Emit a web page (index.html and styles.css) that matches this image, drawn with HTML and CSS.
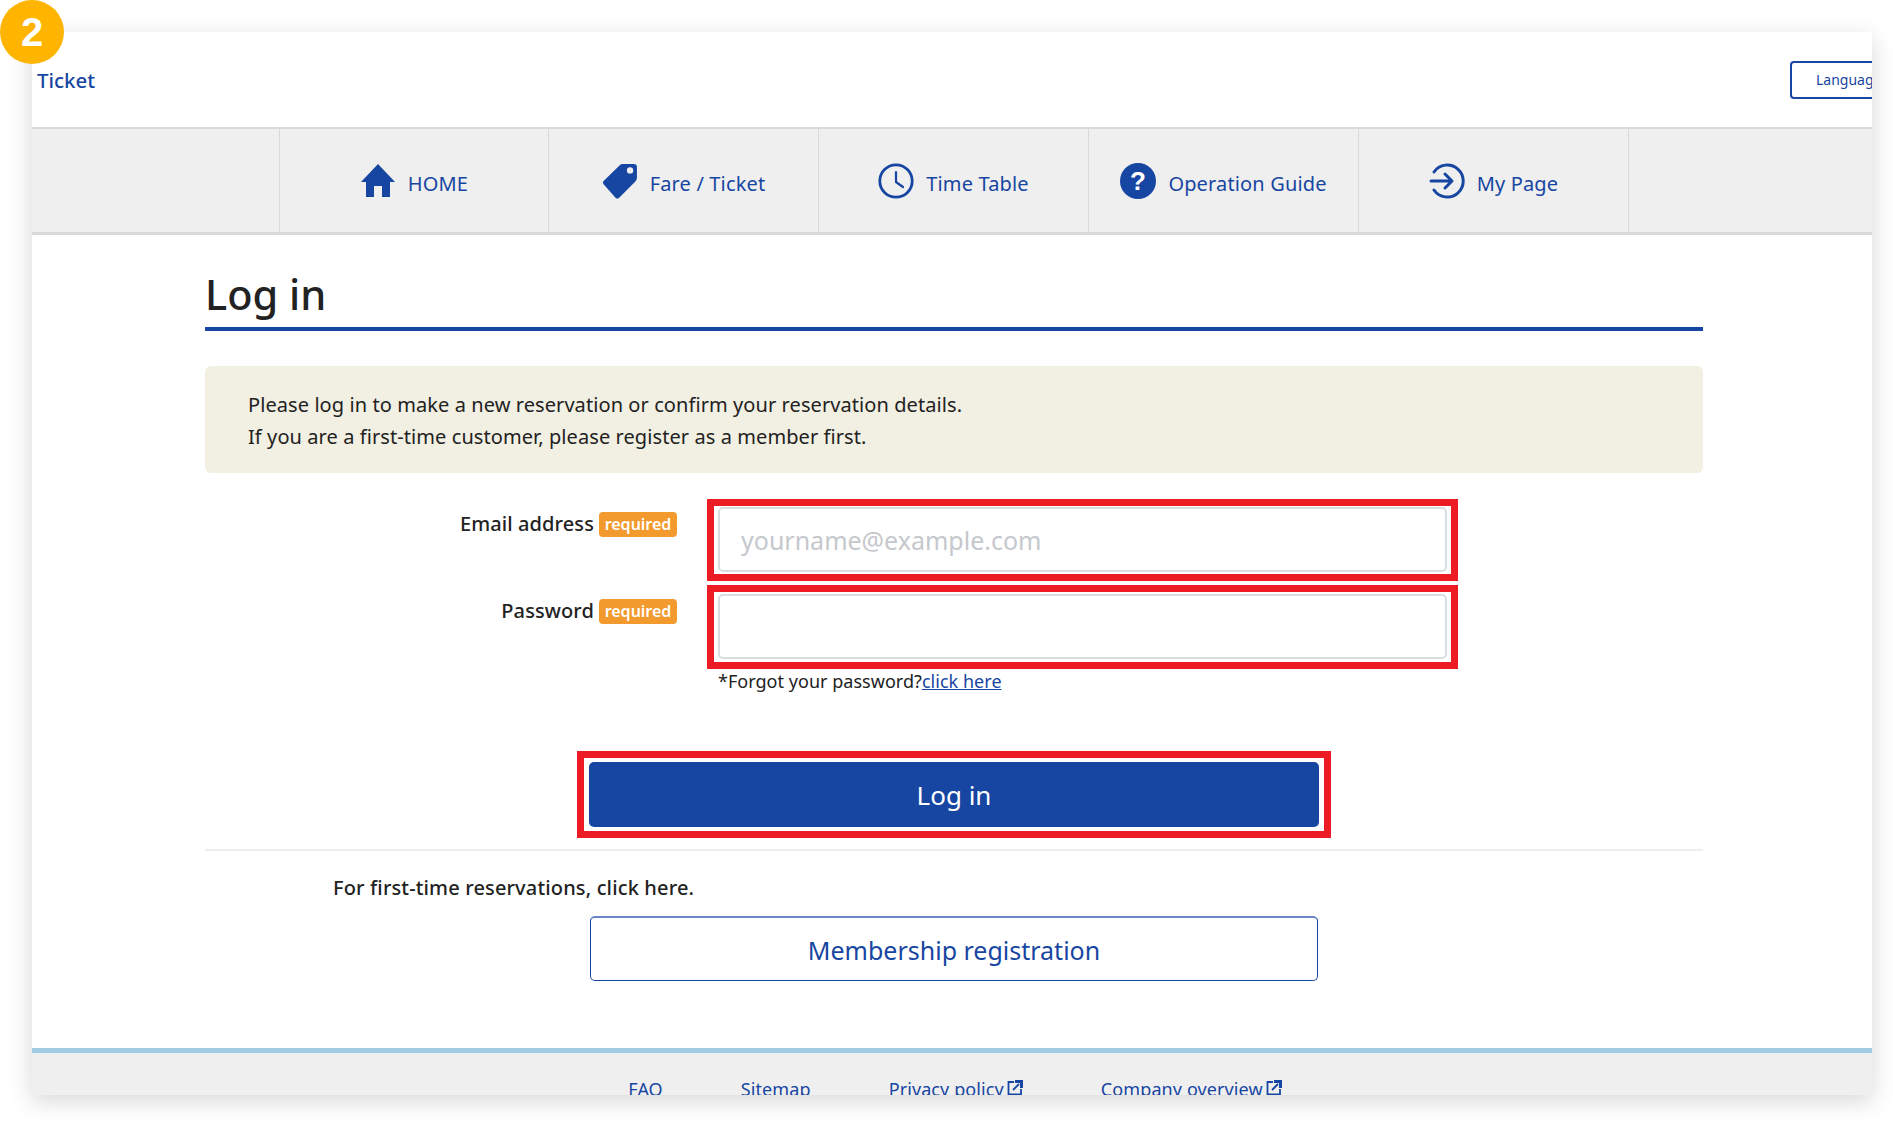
FILE: index.html
```html
<!DOCTYPE html>
<html lang="en">
  <head>
    <meta charset="UTF-8" />
    <title>Log in</title>
    <link rel="stylesheet" href="styles.css">
  </head>
  <body>
    <div class="step_badge">2</div>
    <div class="window">
      <header class="top_bar">
        <a href="#" class="brand">Ticket</a>
        <button class="lang_button">Language</button>
      </header>
      <nav class="nav_bar">
        <a href="#" class="nav_link">
          <svg class="nav_icon" viewBox="0 0 36 34"><path fill="#1746a2" d="M18 0 35 18H30V33H22V22H14V33H6V18H1Z"/></svg>
          HOME
        </a>
        <a href="#" class="nav_link">
          <svg class="nav_icon" viewBox="0 0 34 34"><path fill="#1746a2" fill-rule="evenodd" d="M19 1H30Q33 1 33 4V14Q33 16 31.500 17.500L16 33Q14.500 34 13 33L1.500 20Q0 18.500 1.500 17L17 2Q18 1 19 1ZM26.500 4A3 3 0 1 0 26.500 10A3 3 0 1 0 26.500 4Z"/></svg>
          Fare / Ticket
        </a>
        <a href="#" class="nav_link">
          <svg class="nav_icon" viewBox="0 0 36 36"><circle cx="18" cy="18" r="16.200" fill="none" stroke="#1746a2" stroke-width="2.800"/><path fill="none" stroke="#1746a2" stroke-width="2.200" stroke-linecap="round" stroke-linejoin="round" d="M18 9V19L25 24"/></svg>
          Time Table
        </a>
        <a href="#" class="nav_link">
          <svg class="nav_icon" viewBox="0 0 36 36"><circle cx="18" cy="18" r="18" fill="#1746a2"/><text x="18" y="27" class="icon_mark">?</text></svg>
          Operation Guide
        </a>
        <a href="#" class="nav_link">
          <svg class="nav_icon" viewBox="0 0 36 36"><path fill="none" stroke="#1746a2" stroke-width="3" stroke-linecap="round" d="M5 9A16 16 0 1 1 5 27"/><path fill="none" stroke="#1746a2" stroke-width="3" stroke-linecap="round" stroke-linejoin="round" d="M2 18H23M16 11 23 18 16 25"/></svg>
          My Page
        </a>
      </nav>

      <main class="content">
        <h1 class="page_title">Log in</h1>
        <div class="notice">
          <p>Please log in to make a new reservation or confirm your reservation details.</p>
          <p>If you are a first-time customer, please register as a member first.</p>
        </div>

        <form class="login_form">
          <div class="form_row">
            <label class="field_label">Email address <span class="required">required</span></label>
            <div class="red_box"><input class="text_input" type="text" placeholder="yourname@example.com"></div>
          </div>
          <div class="form_row form_row_second">
            <label class="field_label">Password <span class="required">required</span></label>
            <div class="red_box"><input class="text_input" type="password"></div>
          </div>
          <p class="forgot">*Forgot your password?<a href="#">click here</a></p>
          <div class="red_box login_box">
            <button type="button" class="login_button">Log in</button>
          </div>
        </form>

        <hr class="divider">
        <p class="first_time">For first-time reservations, click here.</p>
        <a href="#" class="register_button">Membership registration</a>
      </main>

      <footer class="footer">
        <a href="#">FAQ</a>
        <a href="#">Sitemap</a>
        <a href="#">Privacy policy<svg class="ext_icon" viewBox="0 0 16 16"><path fill="none" stroke="#1746a2" stroke-width="1.800" d="M7 2H1.500V14.500H14V9M6 10 12 4"/><path fill="#1746a2" d="M8 0H16V8L13 8V3H8Z"/></svg></a>
        <a href="#">Company overview<svg class="ext_icon" viewBox="0 0 16 16"><path fill="none" stroke="#1746a2" stroke-width="1.800" d="M7 2H1.500V14.500H14V9M6 10 12 4"/><path fill="#1746a2" d="M8 0H16V8L13 8V3H8Z"/></svg></a>
      </footer>
    </div>
  </body>
</html>
```

FILE: styles.css
```css
body {
  margin: 0;
  height: 1121px;
  overflow: hidden;

  --blue: #1746a2;
  --red: #ed1c24;
  --grey: #efefef;
  --line: #d9d9d9;
  --text: #222;

  font-family: "Noto Sans", sans-serif;
  color: var(--text);
  background-color: #fff;
}

p {
  margin: 0;
}

a {
  color: var(--blue);
  text-decoration: none;
}

.step_badge {
  position: absolute;
  left: 0;
  top: 0;
  z-index: 2;
  width: 64px;
  height: 64px;
  border-radius: 50%;
  background-color: #ffb400;
  color: #fff;
  font-family: "Liberation Sans", sans-serif;
  font-size: 40px;
  font-weight: 700;
  line-height: 64px;
  text-align: center;
}

.window {
  margin: 32px 0 0 32px;
  width: 1840px;
  height: 1063px;
  overflow: hidden;
  display: flex;
  flex-direction: column;
  background-color: #fff;
  box-shadow: 0 6px 22px rgba(0, 0, 0, 0.16);
}

.top_bar {
  height: 95px;
  flex: none;
  display: flex;
  align-items: center;
  justify-content: space-between;
  box-sizing: border-box;
  padding: 0 0 0 5px;
}

.brand {
  font-size: 20.500px;
  font-weight: 500;
}

.lang_button {
  width: 120px;
  height: 38px;
  margin: 0 -38px 0 0;
  flex: none;
  box-sizing: border-box;
  border: 2px solid var(--blue);
  border-radius: 4px;
  background-color: #fff;
  color: var(--blue);
  font-family: inherit;
  font-size: 14px;
  text-align: left;
  padding: 0 0 0 24px;
}

.nav_bar {
  height: 108px;
  flex: none;
  display: flex;
  box-sizing: border-box;
  padding-left: 247px;
  background-color: var(--grey);
  border-top: 2px solid var(--line);
  border-bottom: 3px solid var(--line);
}

.nav_link {
  width: 270px;
  box-sizing: border-box;
  display: flex;
  align-items: center;
  justify-content: center;
  gap: 12px;
  padding-top: 7px;
  border-left: 1px solid var(--line);
  font-size: 20px;
  letter-spacing: 0.15px;
  line-height: 30px;
}

.nav_link:first-child {
  width: 269px;
}

.nav_link:last-child {
  width: 271px;
  border-right: 1px solid var(--line);
}

.nav_icon {
  width: 36px;
  height: 36px;
  margin-bottom: 6px;
}

.icon_mark {
  fill: #fff;
  font-family: "Liberation Sans", sans-serif;
  font-size: 26px;
  font-weight: 700;
  text-anchor: middle;
}

.content {
  flex: 1;
  padding: 0 169px 0 173px;
}

.page_title {
  margin: 0;
  height: 96px;
  box-sizing: border-box;
  padding-top: 32px;
  border-bottom: 4px solid var(--blue);
  font-size: 41.500px;
  font-weight: 500;
  line-height: 55px;
}

.notice {
  margin-top: 35px;
  height: 107px;
  box-sizing: border-box;
  padding: 23px 43px;
  border-radius: 6px;
  background-color: #f2efe3;
  font-size: 20px;
  letter-spacing: 0.08px;
  line-height: 32px;
}

.login_form {
  margin-top: 26px;
}

.form_row {
  display: flex;
  gap: 30px;
}

.form_row_second {
  margin-top: 4px;
}

.field_label {
  width: 472px;
  flex: none;
  padding-top: 10px;
  box-sizing: border-box;
  display: flex;
  justify-content: flex-end;
  align-items: center;
  align-self: flex-start;
  gap: 5px;
  font-size: 20px;
  font-weight: 500;
  letter-spacing: 0.1px;
  line-height: 30px;
}

.form_row_second .field_label {
  padding-top: 11px;
}

.required {
  width: 78px;
  height: 25px;
  border-radius: 4px;
  background-color: #f39a2e;
  color: #fff;
  font-size: 16px;
  font-weight: 600;
  letter-spacing: 0;
  line-height: 25px;
  text-align: center;
}

.red_box {
  box-sizing: border-box;
  width: 751px;
  border: 7px solid var(--red);
  padding: 1px 4px 2px;
}

.form_row_second .red_box {
  padding: 2px 4px 3px;
}

.text_input {
  display: block;
  box-sizing: border-box;
  width: 100%;
  height: 65px;
  border: 2px solid #d8dde2;
  border-radius: 5px;
  padding: 1px 21px 0;
  font-family: inherit;
  font-size: 25px;
}

.text_input::placeholder {
  color: #c5c8cc;
}

.forgot {
  margin: 0 0 0 513px;
  font-size: 18px;
  letter-spacing: 0.03px;
  line-height: 24px;
}

.forgot a {
  text-decoration: underline;
}

.login_box {
  width: 754px;
  margin: 58px auto 0;
  padding: 4px 5px;
}

.login_button {
  display: block;
  width: 100%;
  height: 65px;
  border: 0;
  border-radius: 5px;
  background-color: var(--blue);
  color: #fff;
  font-family: inherit;
  font-size: 26px;
}

.divider {
  margin: 11px 0 0;
  border: 0;
  border-top: 2px solid #eee;
}

.first_time {
  margin: 23px 0 0 128px;
  font-size: 20px;
  font-weight: 500;
  letter-spacing: 0.15px;
  line-height: 28px;
}

.register_button {
  display: block;
  width: 728px;
  height: 65px;
  box-sizing: border-box;
  margin: 14px auto 0;
  border: 1px solid var(--blue);
  border-top: 2px solid #6a88c8;
  border-radius: 5px;
  font-size: 25px;
  line-height: 64px;
  text-align: center;
}

.footer {
  height: 47px;
  flex: none;
  display: flex;
  justify-content: center;
  gap: 78px;
  box-sizing: border-box;
  padding: 23px 0 0 6px;
  overflow: hidden;
  border-top: 5px solid #a0cbe2;
  background-color: var(--grey);
  font-size: 18px;
  letter-spacing: 0.1px;
  line-height: 26px;
}

.footer a {
  flex: none;
}

.ext_icon {
  width: 16px;
  height: 16px;
  margin-left: 3px;
}
```
